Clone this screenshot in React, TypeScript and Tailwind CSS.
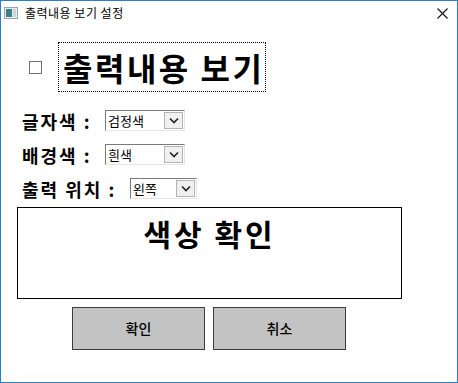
const SelectBox = ({ value, w }: { value: string; w: string }) => {
    return (
        <div className={`flex h-[21px] ${w} items-stretch border border-t-[#7a7a7a] border-l-[#7a7a7a] border-r-[#e6e6e6] border-b-[#e6e6e6] bg-white`}>
            <div className="flex flex-1 items-center pl-[2px] text-[13px] leading-none text-black">{value}</div>
            <div className="m-[1px] flex w-[19px] items-center justify-center border border-[#b4b4b4] bg-[#f0f0f0]">
                <svg width="10" height="7" viewBox="0 0 10 7">
                    <path d="M1 1.5 L5 5.5 L9 1.5" fill="none" stroke="#222" strokeWidth="1.6" />
                </svg>
            </div>
        </div>
    )
}

const App = () => {
    return (
        <div
            className="flex h-[383px] w-[458px] flex-col border border-[#2b80c6] bg-white text-black"
            style={{ fontFamily: '"Noto Sans CJK KR", "Noto Sans", sans-serif' }}
        >
            {/* title bar */}
            <div className="flex h-[24px] items-center pl-[3px] pr-[9px]">
                <svg width="14" height="12" viewBox="0 0 14 12">
                    <rect x="0.5" y="0.5" width="13" height="11" fill="#e8eef2" stroke="#9aa5ae" />
                    <rect x="2" y="2" width="6" height="8" fill="#3d7d86" />
                    <rect x="9" y="2" width="3" height="8" fill="#c9d3da" />
                </svg>
                <span className="ml-[7px] text-[12px] leading-none tracking-[0.5px]">출력내용 보기 설정</span>
                <svg className="ml-auto" width="11" height="11" viewBox="0 0 11 11">
                    <path d="M0.5 0.5 L10.5 10.5 M10.5 0.5 L0.5 10.5" stroke="#111" strokeWidth="1.1" />
                </svg>
            </div>

            {/* show checkbox */}
            <div className="mt-[17px] flex items-center pl-[28px]">
                <div className="h-[13px] w-[13px] border border-[#707070] bg-white" />
                <div className="ml-[16px] flex h-[50px] w-[208px] items-center border border-dotted border-black pl-[4px]">
                    <span className="text-[32px] font-bold leading-none tracking-[2.5px]">출력내용 보기</span>
                </div>
            </div>

            {/* options */}
            <div className="mt-[18px] flex flex-col gap-[13px] pl-[21px]">
                <div className="flex items-center">
                    <span className="w-[83px] text-[18px] font-bold leading-none tracking-[2px]">글자색 :</span>
                    <SelectBox value="검정색" w="w-[80px]" />
                </div>
                <div className="flex items-center">
                    <span className="w-[83px] text-[18px] font-bold leading-none tracking-[2px]">배경색 :</span>
                    <SelectBox value="흰색" w="w-[80px]" />
                </div>
                <div className="flex items-center">
                    <span className="w-[108px] text-[18px] font-bold leading-none tracking-[2px]">출력 위치 :</span>
                    <SelectBox value="왼쪽" w="w-[67px]" />
                </div>
            </div>

            {/* preview */}
            <div className="ml-[16px] mt-[8px] flex h-[92px] w-[385px] justify-center border border-black pt-[10px]">
                <span className="text-[30px] font-bold leading-none tracking-[3px]">색상 확인</span>
            </div>

            {/* buttons */}
            <div className="ml-[71px] mt-[8px] flex gap-[8px]">
                <button className="flex h-[43px] w-[133px] items-center justify-center border border-[#3c3c3c] bg-[#c3c3c3] text-[14px] font-medium">
                    확인
                </button>
                <button className="flex h-[43px] w-[133px] items-center justify-center border border-[#3c3c3c] bg-[#c3c3c3] text-[14px] font-medium">
                    취소
                </button>
            </div>
        </div>
    )
}

export default App
